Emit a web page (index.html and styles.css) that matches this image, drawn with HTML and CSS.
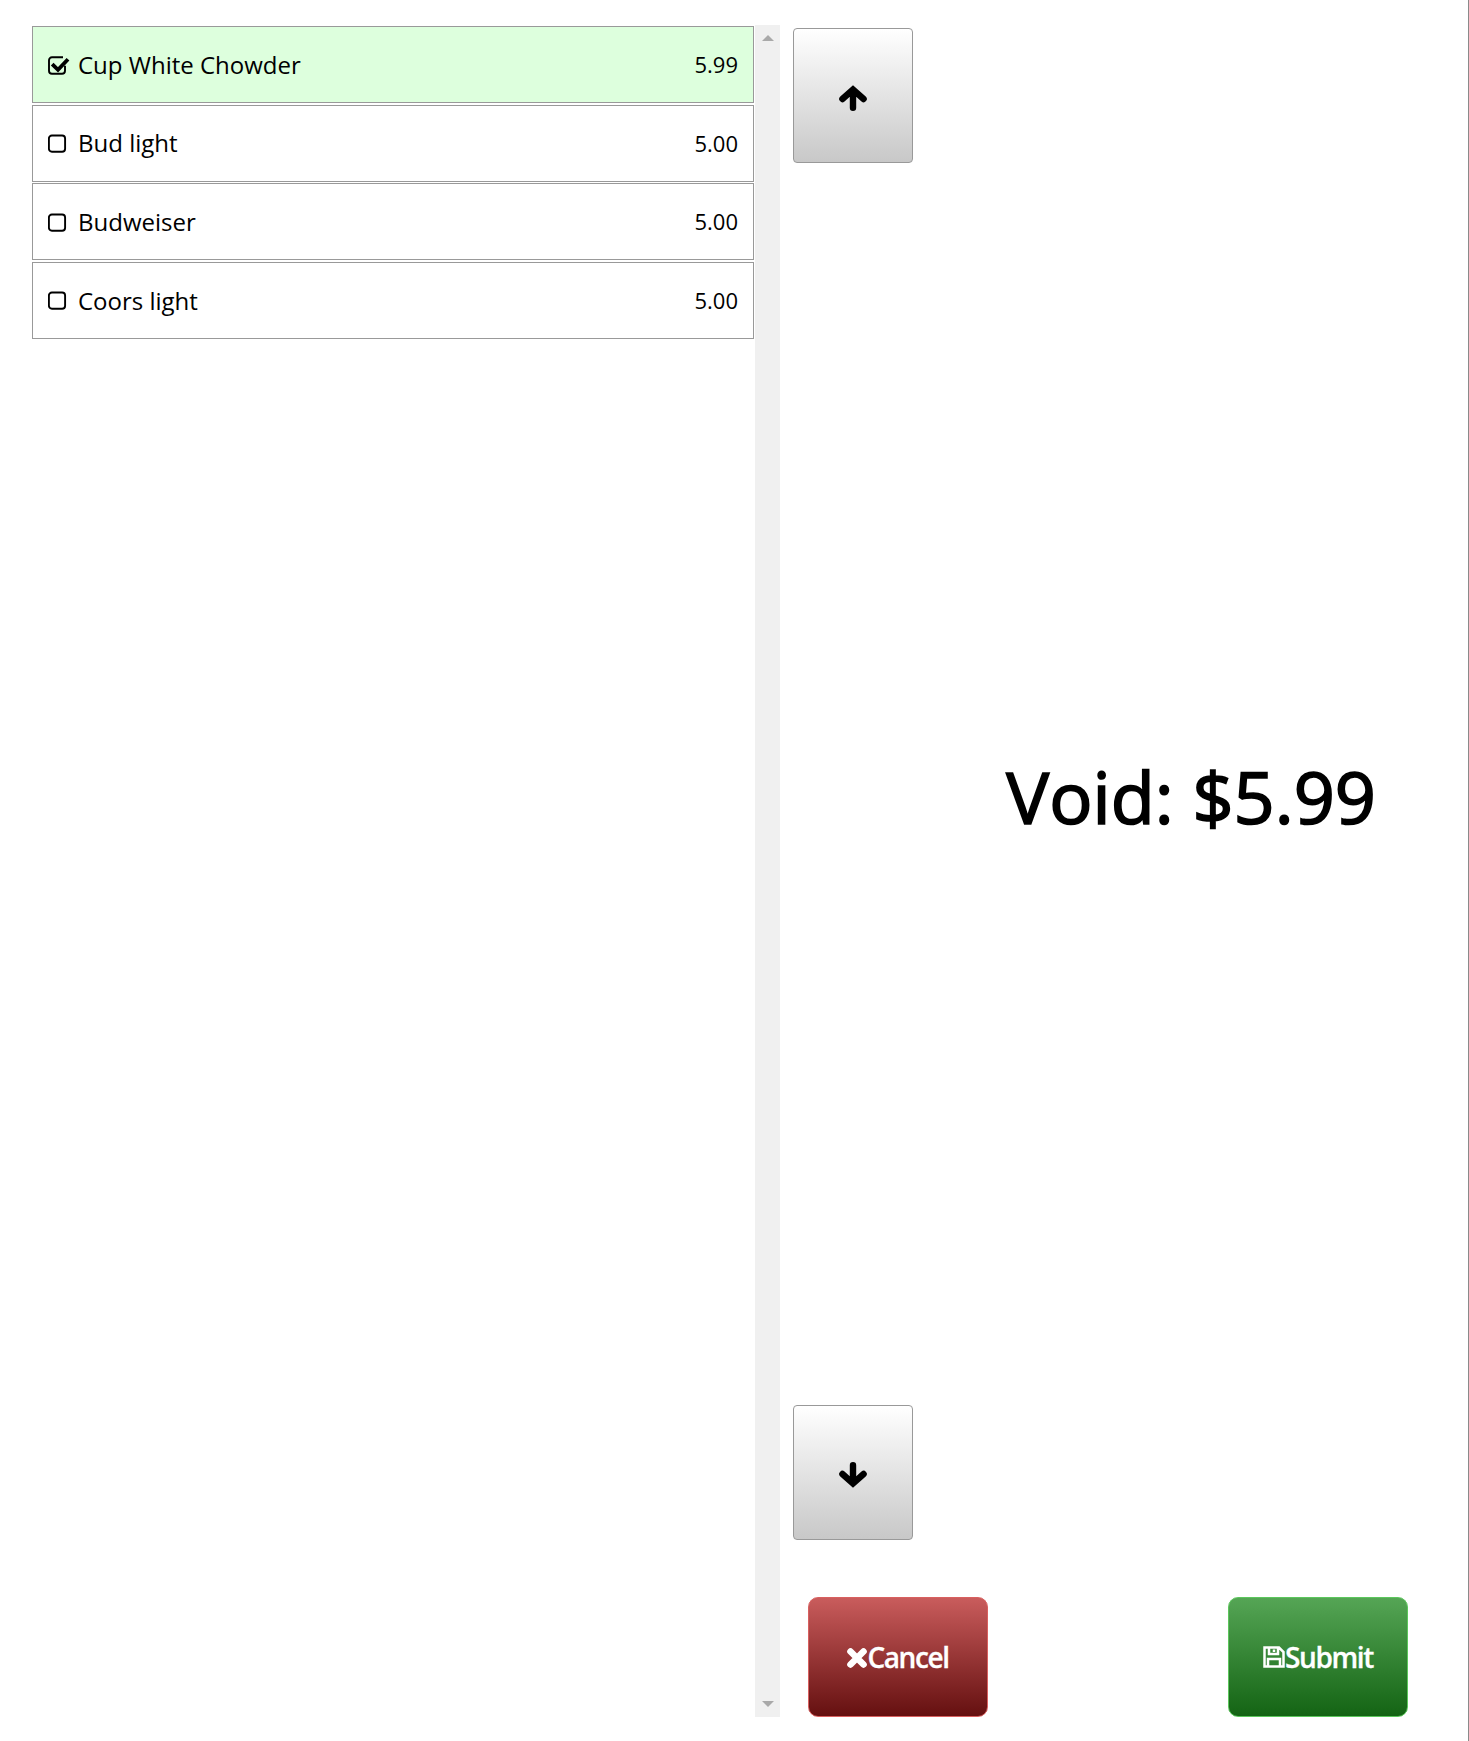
FILE: index.html
```html
<!DOCTYPE html>
<html lang="en">
<head>
    <meta charset="UTF-8">
    <title>Void Items</title>
    <link rel="stylesheet" href="styles.css">
</head>
<body>
    <div class="page">
        <div class="item-list">
            <div class="item selected">
                <svg class="check" viewBox="0 0 24 24"><path d="M15 5.2 H4 a3 3 0 0 0 -3 3 V18.7 a3 3 0 0 0 3 3 H14 a3 3 0 0 0 3 -3 V13.7" class="box"/><path d="M4.2 12.2 L10 17.9 L20 7.3" class="tick"/></svg>
                <span class="item-name">Cup White Chowder</span>
                <span class="item-price">5.99</span>
            </div>
            <div class="item">
                <svg class="check" viewBox="0 0 24 24"><rect x="0.9" y="4.5" width="16.2" height="16.2" rx="3" class="box"/></svg>
                <span class="item-name">Bud light</span>
                <span class="item-price">5.00</span>
            </div>
            <div class="item">
                <svg class="check" viewBox="0 0 24 24"><rect x="0.9" y="4.5" width="16.2" height="16.2" rx="3" class="box"/></svg>
                <span class="item-name">Budweiser</span>
                <span class="item-price">5.00</span>
            </div>
            <div class="item">
                <svg class="check" viewBox="0 0 24 24"><rect x="0.9" y="4.5" width="16.2" height="16.2" rx="3" class="box"/></svg>
                <span class="item-name">Coors light</span>
                <span class="item-price">5.00</span>
            </div>
        </div>
        <div class="scrollbar">
            <span class="scroll-arrow up"></span>
            <span class="scroll-arrow down"></span>
        </div>
        <div class="side">
            <div class="pager">
                <button class="page-btn">
                    <svg viewBox="0 0 28 26" class="arrow"><path d="M14 22.7 V5 M3.4 14 L14 4.6 L24.6 14"/></svg>
                </button>
                <div class="void-total">Void: $5.99</div>
                <button class="page-btn">
                    <svg viewBox="0 0 28 26" class="arrow"><path d="M14 3.3 V21 M3.4 12 L14 21.4 L24.6 12"/></svg>
                </button>
            </div>
            <div class="actions">
                <button class="action cancel">
                    <svg viewBox="0 0 20 20" class="action-icon"><path d="M3.5 3.5 L16.5 16.5 M16.5 3.5 L3.5 16.5" class="cross"/></svg>Cancel
                </button>
                <button class="action submit">
                    <svg viewBox="0 0 22 22" class="action-icon"><path d="M1.5 1.5 H16 L20.5 6 V20.5 H1.5 Z M6 1.5 V8 H15 V1.5 M5 20.5 V13 H17 V20.5 M11 3.5 V6" class="disk"/></svg>Submit
                </button>
            </div>
        </div>
    </div>
</body>
</html>
```

FILE: styles.css
```css
body, html {
    margin: 0;
    padding: 0;
    height: 1741px;
    background-color: #ffffff;
    font-family: "Open Sans", sans-serif;
    color: #000000;
}
.page {
    display: flex;
    height: 1741px;
    box-sizing: border-box;
    padding: 25px 0 24px 32px;
    border-right: 1px solid #8a8a8a;
}
.item-list {
    width: 722px;
    padding-top: 1px;
    display: flex;
    flex-direction: column;
    gap: 1.6px;
}
.item {
    display: flex;
    align-items: center;
    box-sizing: border-box;
    height: 77px;
    padding: 0 15px 0.3px;
    border: 1px solid #999999;
    font-size: 24px;
}
.item.selected {
    background-color: #ddffdd;
}
.check {
    width: 24px;
    height: 24px;
    margin-right: 6px;
    flex: none;
}
.box {
    fill: none;
    stroke: #000000;
    stroke-width: 1.9;
}
.tick {
    fill: none;
    stroke: #000000;
    stroke-width: 3.8;
}
.item-name {
    flex: 1;
}
.item-price {
    font-size: 22px;
    margin-bottom: 0.8px;
}
.scrollbar {
    width: 25px;
    margin-left: 1px;
    background-color: #f0f0f0;
    display: flex;
    flex-direction: column;
    justify-content: space-between;
    align-items: center;
    padding: 10px 0;
    box-sizing: border-box;
}
.scroll-arrow {
    width: 0;
    height: 0;
    border-left: 6px solid transparent;
    border-right: 6px solid transparent;
}
.scroll-arrow.up {
    border-bottom: 6.5px solid #a9a9a9;
}
.scroll-arrow.down {
    border-top: 6.5px solid #a9a9a9;
}
.side {
    flex: 1;
    display: flex;
    flex-direction: column;
    padding-left: 13px;
}
.pager {
    flex: 1;
    padding-top: 3px;
    display: flex;
    flex-direction: column;
    justify-content: space-between;
}
.page-btn {
    width: 120px;
    height: 135px;
    padding: 0;
    border: 1px solid #999999;
    border-radius: 4px;
    background: linear-gradient(to bottom, #ffffff, #c8c8c8);
    display: flex;
    align-items: center;
    justify-content: center;
}
.arrow {
    width: 28px;
    height: 26px;
    margin-top: 5px;
}
.arrow path {
    fill: none;
    stroke: #000000;
    stroke-width: 6.4;
    stroke-linecap: round;
    stroke-linejoin: miter;
}
.void-total {
    align-self: flex-end;
    margin-top: 24px;
    margin-right: 92px;
    font-size: 72px;
    line-height: 98px;
    -webkit-text-stroke: 1.7px #000000;
}
.actions {
    display: flex;
    justify-content: space-between;
    padding: 57px 60px 0 15px;
}
.action {
    width: 180px;
    height: 120px;
    padding: 0;
    border-radius: 10px;
    color: #ffffff;
    font-family: "Open Sans", sans-serif;
    font-size: 28px;
    font-weight: 600;
    letter-spacing: -1.4px;
    display: flex;
    align-items: center;
    justify-content: center;
    -webkit-text-stroke: 0.3px #ffffff;
}
.cancel {
    border: 1px solid #d9605f;
    background: linear-gradient(to bottom, #c95c5c, #651010);
}
.submit {
    border: 1px solid #5cc75c;
    background: linear-gradient(to bottom, #55a555, #146414);
}
.action-icon {
    width: 22px;
    height: 22px;
    flex: none;
}
.cancel .action-icon {
    width: 20px;
    height: 20px;
    margin-top: 1px;
}
.cross {
    fill: none;
    stroke: #ffffff;
    stroke-width: 6.6;
    stroke-linecap: round;
}
.disk {
    fill: none;
    stroke: #ffffff;
    stroke-width: 2.5;
}
```
